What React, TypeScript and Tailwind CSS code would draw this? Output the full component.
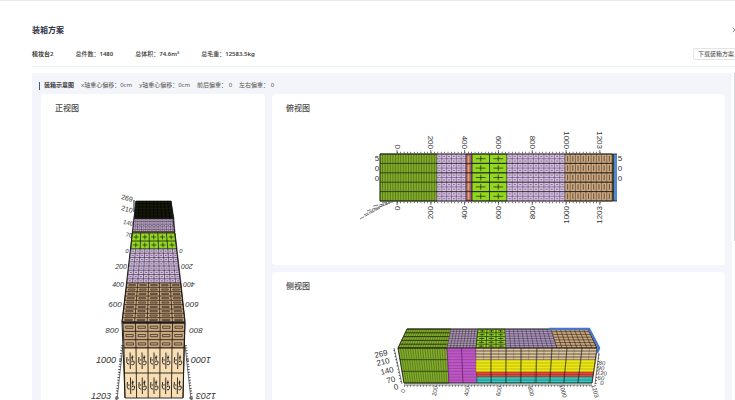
import { X } from "lucide-react";

type Pt = [number, number];
type Quad = [Pt, Pt, Pt, Pt]; // top-left, top-right, bottom-right, bottom-left

const INK = "#1c1c1c";

const LILAC = "#d6c1e2";
const GREEN = "#84ad2b";
const LIME = "#93d81f";
const TAN = "#c9a882";
const WHEAT = "#f8deb2";

const stats = [
    { label: "总件数", value: "1480" },
    { label: "总体积", value: "74.6m³" },
    { label: "总毛重", value: "12583.5kg" },
];

const offsets = ["x轴重心偏移：0cm", "y轴重心偏移：0cm", "前后偏重： 0", "左右偏重： 0"];

const marks = ["0", "200", "400", "600", "800", "1000", "1203"];

const at = ([tl, tr, br, bl]: Quad, u: number, v: number): Pt => {
    const x = (tl[0] * (1 - u) + tr[0] * u) * (1 - v) + (bl[0] * (1 - u) + br[0] * u) * v;
    const y = (tl[1] * (1 - u) + tr[1] * u) * (1 - v) + (bl[1] * (1 - u) + br[1] * u) * v;
    return [x, y];
};

const box = (x: number, y: number, w: number, h: number): Quad => [
    [x, y],
    [x + w, y],
    [x + w, y + h],
    [x, y + h],
];

interface FaceProps {
    quad: Quad;
    fill: string;
    cols: number;
    rows: number;
    line?: number;
    colLine?: number;
    stroke?: string;
    mark?: "plus" | "dash" | "bar" | "fork" | "dot";
}

// One stack of boxes seen from a side, split into cols x rows
function Face({ quad, fill, cols, rows, line = 0.6, colLine = line, stroke = INK, mark }: FaceProps) {
    let colPath = "";
    let rowPath = "";
    let markPath = "";
    for (let i = 0; i <= cols; i++) {
        colPath += `M${at(quad, i / cols, 0)}L${at(quad, i / cols, 1)}`;
    }
    for (let j = 0; j <= rows; j++) {
        rowPath += `M${at(quad, 0, j / rows)}L${at(quad, 1, j / rows)}`;
    }
    if (mark) {
        for (let i = 0; i < cols; i++) {
            for (let j = 0; j < rows; j++) {
                const p = (u: number, v: number) => at(quad, (i + u) / cols, (j + v) / rows);
                if (mark === "plus") markPath += `M${p(0.22, 0.5)}L${p(0.78, 0.5)}M${p(0.5, 0.2)}L${p(0.5, 0.8)}`;
                if (mark === "dash") markPath += `M${p(0.2, 0.38)}L${p(0.8, 0.38)}L${p(0.8, 0.64)}L${p(0.2, 0.64)}Z`;
                if (mark === "bar") markPath += `M${p(0.5, 0.2)}L${p(0.5, 0.8)}`;
                if (mark === "dot") markPath += `M${p(0.3, 0.5)}L${p(0.7, 0.5)}`;
                if (mark === "fork")
                    markPath += `M${p(0.5, 0.18)}L${p(0.5, 0.84)}M${p(0.24, 0.36)}Q${p(0.12, 0.68)} ${p(0.42, 0.64)}M${p(0.28, 0.48)}L${p(0.42, 0.48)}M${p(0.58, 0.4)}L${p(0.78, 0.36)}M${p(0.68, 0.3)}L${p(0.68, 0.5)}M${p(0.58, 0.56)}Q${p(0.92, 0.46)} ${p(0.82, 0.62)}Q${p(0.74, 0.72)} ${p(0.6, 0.66)}`;
            }
        }
    }
    return (
        <g fill="none" stroke={stroke}>
            <path d={`M${quad.join("L")}Z`} fill={fill} stroke="none" />
            <path d={colPath} strokeWidth={colLine} />
            <path d={rowPath} strokeWidth={line} />
            {mark && <path d={markPath} strokeWidth={mark === "fork" ? 0.9 : mark === "dot" ? 0.6 : 0.7} />}
        </g>
    );
}

interface TagProps {
    x: number;
    y: number;
    turn?: number;
    size?: number;
    italic?: boolean;
    children: string;
}

function Tag({ x, y, turn = 0, size = 8, italic, children }: TagProps) {
    return (
        <text
            transform={`translate(${x} ${y}) rotate(${turn})`}
            fontSize={size}
            fontStyle={italic ? "italic" : undefined}
            textAnchor="middle"
            dominantBaseline="central"
            fill="#333333"
        >
            {children}
        </text>
    );
}

function FrontView() {
    const rows = [
        { y: 251, left: 127, right: 181, size: 6 },
        { y: 266, left: 121, right: 187, size: 7 },
        { y: 284, left: 118, right: 189, size: 7 },
        { y: 304, left: 115, right: 192, size: 8 },
        { y: 330, left: 112, right: 196, size: 8 },
        { y: 360, left: 106, right: 201, size: 9 },
        { y: 396, left: 101, right: 206, size: 9 },
    ];
    return (
        <svg viewBox="41 120 224 290" className="block w-full font-['Liberation_Sans',sans-serif]" role="img" aria-label="正视图">
            <Face quad={[[136, 201], [171, 201], [174, 219], [134, 219]]} fill="#171b0a" cols={10} rows={6} stroke="#000000" />
            <Face quad={[[134, 219], [174, 219], [175, 232], [133, 232]]} fill={LILAC} cols={10} rows={5} stroke="#33263c" line={0.6} colLine={0.5} mark="dot" />
            <path d="M133 232H175" stroke="#4d3020" strokeWidth="1.6" />
            <Face quad={[[132, 233], [175, 233], [177, 249], [131, 249]]} fill={LIME} cols={5} rows={2} line={0.8} mark="plus" />
            <Face quad={[[131, 249], [177, 249], [181, 283], [127, 283]]} fill={LILAC} cols={10} rows={8} line={0.6} stroke="#33263c" mark="dot" />
            <Face quad={[[127, 283], [181, 283], [185, 322], [122, 322]]} fill={TAN} cols={5} rows={9} stroke="#2c2116" line={0.8} mark="dash" />
            <Face quad={[[123, 323], [185, 323], [184, 348], [124, 348]]} fill={TAN} cols={5} rows={3} line={0.9} stroke="#2c2116" mark="dash" />
            <Face quad={[[124, 348], [184, 348], [183, 398], [125, 398]]} fill={WHEAT} cols={5} rows={2} line={0.9} mark="fork" />
            <path d="M122 322.500H185" stroke={INK} strokeWidth="2" />
            <g stroke={INK} fill="none">
                <path d="M136 201L122 322L125 398M171 201L185 322L183 398M134 200V212" strokeWidth="1" />
                <path d="M123 345L117 400M185 345L191 400" strokeWidth="0.6" />
                <path d="M122 345L116 400M186 345L192 400" strokeWidth="2" strokeDasharray="0.7 2" />
                <path d="M119 360H122M186 360H189M115 398H119M189 398H193" strokeWidth="0.8" />
            </g>
            {rows.map((row, i) => (
                <g key={marks[i]}>
                    <Tag x={row.left} y={row.y} size={row.size} italic>{marks[i]}</Tag>
                    <Tag x={row.right} y={row.y} size={row.size} turn={180} italic>{marks[i]}</Tag>
                </g>
            ))}
            <Tag x={127} y={198} size={7} turn={14}>269</Tag>
            <Tag x={127} y={209} size={7} turn={14}>210</Tag>
            <Tag x={128} y={223} size={6} turn={14}>140</Tag>
            <Tag x={129} y={235} size={6} turn={14}>70</Tag>
        </svg>
    );
}

function TopView() {
    return (
        <svg viewBox="272 120 453 137" className="block w-full font-['Liberation_Sans',sans-serif]" role="img" aria-label="俯视图">
            <Face quad={box(380, 154, 57, 47)} fill={GREEN} cols={22} rows={5} line={1} colLine={0.5} stroke="#33480f" />
            <Face quad={box(437, 154, 29, 47)} fill={LILAC} cols={6} rows={10} line={0.5} stroke="#4a3556" mark="dot" />
            <Face quad={box(466, 154, 6, 47)} fill="#b56fae" cols={1} rows={5} line={0.8} stroke="#56254f" />
            <Face quad={box(467, 155, 3, 45)} fill="#e2a26b" cols={1} rows={5} line={0.6} stroke="#6b2f1c" />
            <Face quad={box(472, 154, 35, 47)} fill={LIME} cols={2} rows={5} line={0.8} mark="plus" />
            <Face quad={box(507, 154, 58, 47)} fill={LILAC} cols={11} rows={10} line={0.5} stroke="#4a3556" mark="dot" />
            <Face quad={box(565, 154, 47, 47)} fill={TAN} cols={9} rows={5} line={0.8} colLine={0.5} mark="bar" stroke="#3d2a18" />
            <path d="M612 154h2v47h-2z" fill="#3c4332" />
            <path d="M614 154h3v47h-3z" fill="#5585d0" />
            <g fill="none" stroke={INK}>
                <path d="M380 154H617M617 201H380V154" strokeWidth="0.8" />
                <path d="M436 163.400H614M436 172.800H614M436 182.200H614M436 191.600H614" strokeWidth="0.7" />
                <path d="M397 152.500H601M397 202.500H601" strokeWidth="1.500" strokeDasharray="0.6 2.780" />
                <path d="M393 202L381 203M390 203L373 206M388 204L367 211M384 205L364 215M380 208L360 219" stroke="#444444" strokeWidth="0.7" strokeDasharray="5 1" />
            </g>
            {marks.map((m, i) => (
                <g key={m} fill="#333333" fontSize="8">
                    <path d={`M${397 + i * 33.8} 150v3M${397 + i * 33.8} 202v3`} stroke={INK} strokeWidth="0.6" />
                    <text transform={`translate(${397 + i * 33.8} 149) rotate(90)`} textAnchor="end" dominantBaseline="central">{m}</text>
                    <text transform={`translate(${397 + i * 33.8} 206) rotate(-90)`} textAnchor="end" dominantBaseline="central">{m}</text>
                </g>
            ))}
            {["5", "0", "0"].map((d, i) => (
                <g key={i}>
                    <Tag x={377} y={158 + i * 10}>{d}</Tag>
                    <Tag x={620} y={158 + i * 10}>{d}</Tag>
                </g>
            ))}
        </svg>
    );
}

function SideView() {
    const sideMarks = ["80", "90", "120", "60", "0"];
    return (
        <svg viewBox="272 298 453 112" className="block w-full font-['Liberation_Sans',sans-serif]" role="img" aria-label="侧视图">
            <Face quad={[[407, 329], [451, 329], [447, 348], [398, 348]]} fill={GREEN} cols={20} rows={5} line={1} colLine={0.4} stroke="#2b3c0d" />
            <Face quad={[[451, 329], [478, 329], [476, 348], [447, 348]]} fill="#b19ab5" cols={9} rows={8} line={0.5} stroke="#35283e" />
            <Face quad={[[478, 329], [505, 329], [506, 348], [476, 348]]} fill={LIME} cols={3} rows={5} line={0.7} mark="plus" />
            <Face quad={[[505, 329], [551, 329], [557, 348], [506, 348]]} fill="#ac97bd" cols={11} rows={8} line={0.5} stroke="#35283e" />
            <Face quad={[[551, 329], [588, 329], [597, 348], [557, 348]]} fill={TAN} cols={8} rows={7} line={0.6} stroke="#32210f" />
            <Face quad={[[398, 348], [447, 348], [449, 383], [404, 383]]} fill={GREEN} cols={20} rows={3} line={1} colLine={0.5} stroke="#35500f" />
            <Face quad={[[447, 348], [476, 348], [477, 383], [449, 383]]} fill="#bd58c5" cols={2} rows={12} line={0.4} colLine={0.9} stroke="#6f2879" />
            <Face quad={[[476, 348], [597, 348], [596, 360], [476, 360]]} fill="#dcc6a2" cols={16} rows={4} line={0.8} colLine={0.3} stroke="#493c28" />
            <Face quad={[[476, 360], [596, 360], [594, 372], [476, 372]]} fill="#eee914" cols={8} rows={4} line={0.4} stroke="#6e6c08" />
            <Face quad={[[476, 372], [594, 372], [593, 377], [477, 377]]} fill="#df493c" cols={8} rows={2} line={0.4} stroke="#6e211b" />
            <Face quad={[[477, 377], [593, 377], [592, 383], [477, 383]]} fill="#35c5ba" cols={8} rows={2} line={0.5} stroke="#17655f" />
            <g fill="none" stroke={INK} strokeWidth="0.8">
                <path d="M407 329H588L597 348H398ZM398 348L404 383H592L597 348" />
                <path d="M491 348V383M506 348V383M521 348V383M537 348L536 383M552 348L550 383M567 348L564 383M582 348L578 383" strokeWidth="0.6" />
                <path d="M394 348L402 384M404 385H592M595 384L599 353" strokeWidth="0.6" />
                <path d="M394 350L401 383M404 386H592M596 384L599 354" strokeWidth="1.500" strokeDasharray="0.6 2.600" />
            </g>
            <path d="M549 329H589L599 348L597 353" fill="none" stroke="#4a74c4" strokeWidth="2.500" />
            <Tag x={381} y={354} turn={-14}>269</Tag>
            <Tag x={383} y={362} turn={-14}>210</Tag>
            <Tag x={387} y={371} turn={-14}>140</Tag>
            <Tag x={391} y={380} turn={-14}>70</Tag>
            <Tag x={396} y={387} turn={-14}>0</Tag>
            {marks.map((m, i) => (
                <Tag key={m} x={403 + i * 32} y={391} turn={i < 4 ? -80 : 75} size={6}>{m}</Tag>
            ))}
            {sideMarks.map((m, i) => (
                <Tag key={m} x={602 - (i % 2)} y={363 + i * 5} turn={10} size={6}>{m}</Tag>
            ))}
        </svg>
    );
}

function Card({ title, className, children }: { title: string; className?: string; children: React.ReactNode }) {
    return (
        <section className={`rounded-sm bg-white ${className ?? ""}`}>
            <h3 className="px-3.5 pt-2 pb-1.5 text-[8px] leading-3 font-medium text-[#444444]">{title}</h3>
            {children}
        </section>
    );
}

export default function App() {
    return (
        <div className="h-screen overflow-hidden border-t border-[#e7ebef] bg-white font-['Noto_Sans','Noto_Sans_CJK_SC',sans-serif] text-[6px] text-[#3c3c3c]">
            <header className="flex items-center justify-between pt-[23px] pl-8">
                <h1 className="text-[8px] leading-3 font-bold text-[#2f3547]">装箱方案</h1>
                <button type="button" aria-label="关闭" className="-mr-1 text-[#555555]">
                    <X className="size-2" strokeWidth={2} />
                </button>
            </header>

            <div className="mt-3 ml-8 flex items-center border-b border-[#eeeff2] pb-1.5">
                <div className="flex flex-1 gap-[22px] font-semibold whitespace-nowrap">
                    <span>梳妆台2</span>
                    {stats.map((s) => (
                        <span key={s.label}>
                            <span className="font-medium">{s.label}：</span>
                            {s.value}
                        </span>
                    ))}
                </div>
                <button type="button" className="-mr-1 h-3 rounded-xs border border-[#e3e4e8] px-1 leading-none whitespace-nowrap">
                    下载装箱方案
                </button>
            </div>

            <div className="mt-1.5 ml-8 flex items-start gap-[2px]">
                <main className="min-w-0 flex-1 bg-[#f4f5fa] pt-2 pr-[7px] pl-[7px]">
                    <div className="flex items-center gap-[7px] whitespace-nowrap">
                        <h2 className="flex items-center gap-1 font-semibold">
                            <span className="h-2 w-px bg-[#2f5f8f]" />
                            装箱示意图
                        </h2>
                        {offsets.map((o) => (
                            <span key={o} className="text-[#555555]">{o}</span>
                        ))}
                    </div>

                    <div className="mt-1 ml-0.5 grid grid-cols-[224fr_453fr] gap-[7px]">
                        <Card title="正视图">
                            <FrontView />
                        </Card>
                        <div className="flex flex-col gap-[7px]">
                            <Card title="俯视图" className="pb-2">
                                <TopView />
                            </Card>
                            <Card title="侧视图" className="flex-1">
                                <SideView />
                            </Card>
                        </div>
                    </div>
                </main>
                {/* scroll thumb */}
                <div className="h-42 w-px bg-[#cfd2da]" />
            </div>
        </div>
    );
}
